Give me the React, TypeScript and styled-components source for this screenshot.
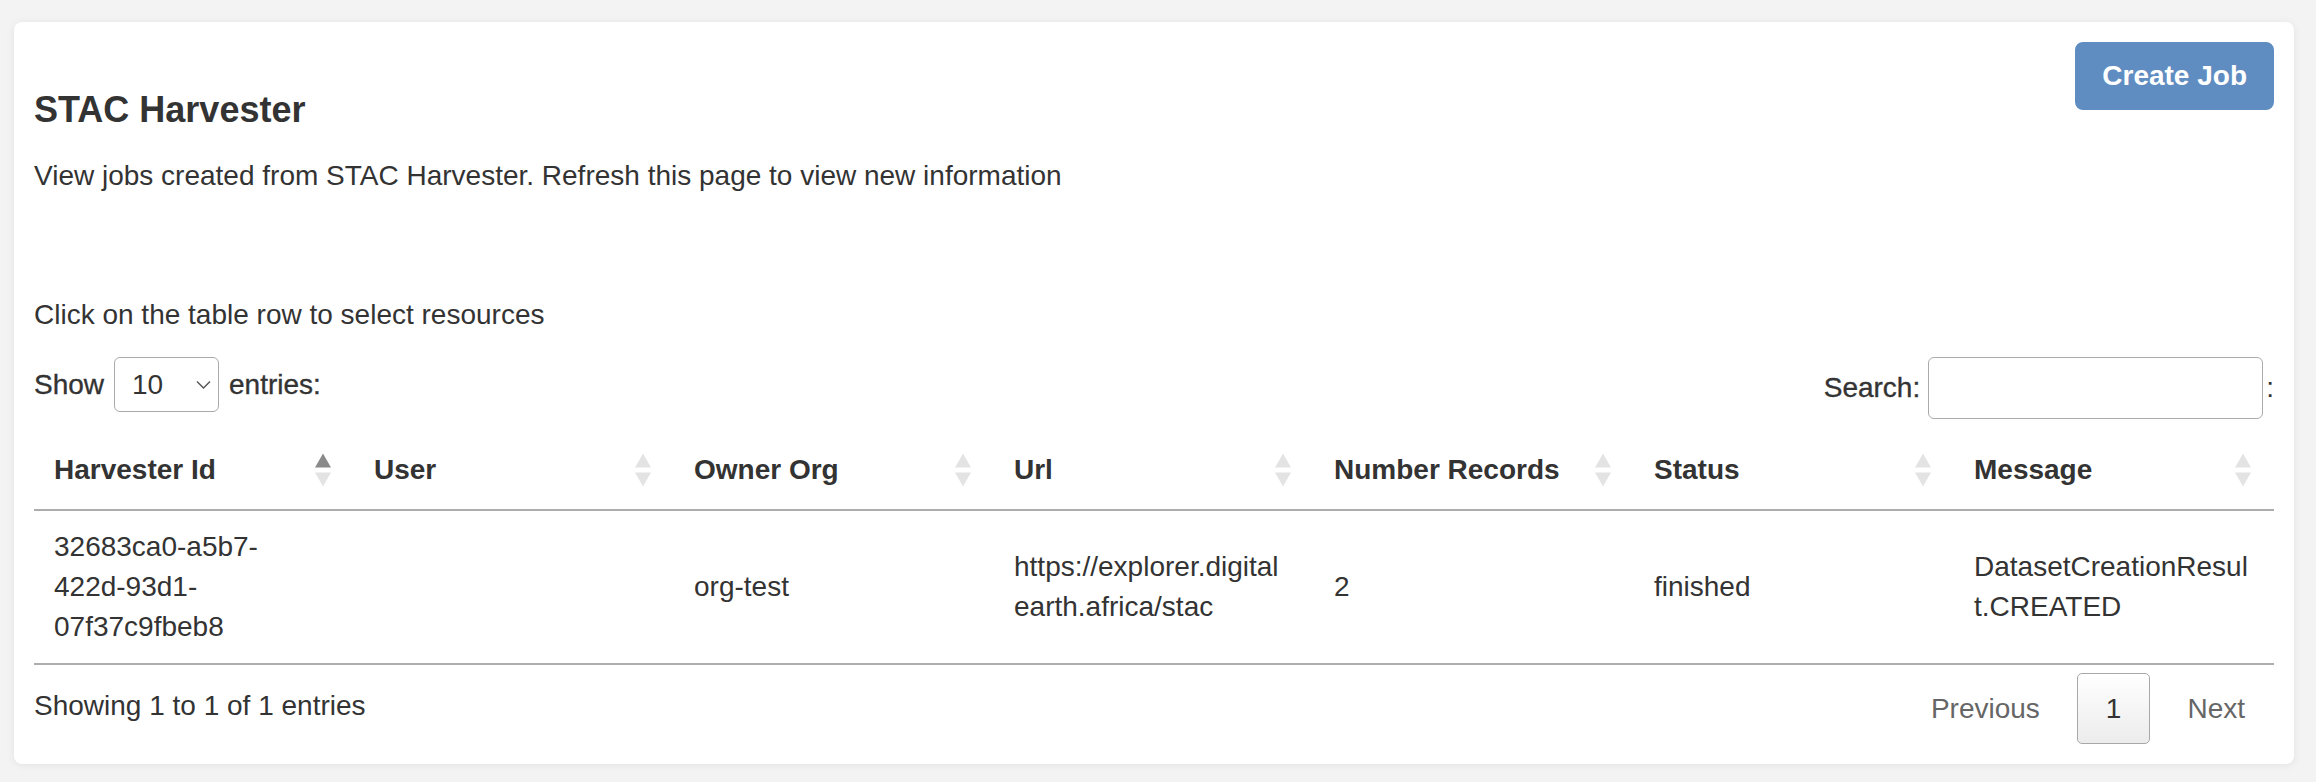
import React from "react";
import styled, { createGlobalStyle } from "styled-components";

const GlobalStyle = createGlobalStyle`
  html, body { margin: 0; padding: 0; }
  body {
    background: #f3f3f3;
    font-family: "Liberation Sans", Arial, Helvetica, sans-serif;
    color: #333;
    font-size: 28px;
    line-height: 40px;
  }
  * { box-sizing: border-box; }
`;

const Page = styled.div`
  padding: 22px 22px 18px 14px;
`;

const Card = styled.section`
  background: #fff;
  border-radius: 8px;
  box-shadow: 0 1px 8px rgba(0, 0, 0, 0.07);
  padding: 20px;
`;

const HeaderRow = styled.div`
  display: flex;
  justify-content: space-between;
  align-items: flex-start;
`;

const Title = styled.h3`
  margin: 48px 0 0;
  font-size: 36px;
  line-height: 40px;
  font-weight: 700;
  color: #333;
`;

const PrimaryButton = styled.button`
  font-family: inherit;
  font-size: 28px;
  font-weight: 700;
  line-height: 40px;
  color: #fff;
  background: #5f8dc1;
  border: 2px solid #5f8dc1;
  border-radius: 8px;
  padding: 12px 25px;
  cursor: pointer;
`;

const Paragraph = styled.p<{ $top: number }>`
  margin: ${(p) => p.$top}px 0 0;
  font-size: 28px;
  line-height: 40px;
`;

const ControlsRow = styled.div`
  margin-top: 22px;
  display: flex;
  justify-content: space-between;
  align-items: flex-start;
`;

const ControlLabel = styled.label`
  display: flex;
  align-items: center;
  gap: 10px;
  font-weight: 400;
  color: #333;
  -webkit-text-stroke: 0.35px #333;
`;

const SearchLabel = styled(ControlLabel)`
  gap: 8px;
`;

const SelectWrap = styled.div`
  position: relative;
  width: 105px;
  height: 55px;
`;

const Select = styled.select`
  appearance: none;
  -webkit-appearance: none;
  width: 100%;
  height: 100%;
  font-family: inherit;
  font-size: 28px;
  color: #333;
  background: #fff;
  border: 1.5px solid #aaa;
  border-radius: 6px;
  padding: 0 0 0 17px;
  -webkit-text-stroke: 0;
`;

const Chevron = styled.svg`
  position: absolute;
  right: 8px;
  top: 50%;
  transform: translateY(-50%);
  pointer-events: none;
`;

const SearchInput = styled.input`
  width: 335px;
  height: 62px;
  border: 1.5px solid #aaa;
  border-radius: 6px;
  font-family: inherit;
  font-size: 28px;
  padding: 0 10px;
  background: #fff;
`;

const Colon = styled.span`
  -webkit-text-stroke: 0;
  margin-left: -5px;
`;

const Table = styled.table`
  margin-top: 11px;
  width: 100%;
  table-layout: fixed;
  border-collapse: collapse;
`;

const Th = styled.th`
  position: relative;
  text-align: left;
  font-weight: 700;
  font-size: 28px;
  line-height: 40px;
  padding: 20px 46px 19px 20px;
  border-bottom: 2px solid #adadad;
  color: #333;
  white-space: nowrap;
`;

const SortIcon = styled.svg`
  position: absolute;
  right: 23px;
  top: 50%;
  transform: translateY(-50%);
`;

const Td = styled.td`
  padding: 16px 25.5px 16px 20px;
  vertical-align: middle;
  font-size: 28px;
  line-height: 40px;
  overflow-wrap: anywhere;
  border-bottom: 2px solid #adadad;
`;

const Footer = styled.div`
  display: flex;
  justify-content: space-between;
  align-items: flex-start;
`;

const Info = styled.div`
  padding-top: 21px;
`;

const Pagination = styled.div`
  padding-top: 8px;
  display: flex;
  gap: 8px;
`;

const PageButton = styled.span<{ $current?: boolean }>`
  display: inline-block;
  min-width: 42px;
  text-align: center;
  padding: 15px 28px 14px;
  line-height: 40px;
  border-radius: 5px;
  border: 1px solid ${(p) => (p.$current ? "#a8a8a8" : "transparent")};
  background: ${(p) =>
    p.$current ? "linear-gradient(to bottom, #ffffff 0%, #ececec 100%)" : "transparent"};
  color: ${(p) => (p.$current ? "#333" : "#666")};
`;

type Col = { label: string; sort?: "asc" };

const columns: Col[] = [
  { label: "Harvester Id", sort: "asc" },
  { label: "User" },
  { label: "Owner Org" },
  { label: "Url" },
  { label: "Number Records" },
  { label: "Status" },
  { label: "Message" },
];

const rows = [
  [
    "32683ca0-a5b7-422d-93d1-07f37c9fbeb8",
    "",
    "org-test",
    "https://explorer.digitalearth.africa/stac",
    "2",
    "finished",
    "DatasetCreationResult.CREATED",
  ],
];

function Sort({ asc }: { asc?: boolean }) {
  return (
    <SortIcon width="16" height="33" viewBox="0 0 16 33">
      <path d="M8 0 L16 14 L0 14 Z" fill={asc ? "#8a8a8a" : "#e3e3e3"} />
      <path d="M0 19 L16 19 L8 33 Z" fill="#e3e3e3" />
    </SortIcon>
  );
}

export default function App() {
  return (
    <>
      <GlobalStyle />
      <Page>
        <Card>
          <HeaderRow>
            <Title>STAC Harvester</Title>
            <PrimaryButton>Create Job</PrimaryButton>
          </HeaderRow>
          <Paragraph $top={26}>
            View jobs created from STAC Harvester. Refresh this page to view new information
          </Paragraph>
          <Paragraph $top={99}>Click on the table row to select resources</Paragraph>
          <ControlsRow>
            <ControlLabel>
              Show
              <SelectWrap>
                <Select defaultValue="10">
                  <option value="10">10</option>
                  <option value="25">25</option>
                  <option value="50">50</option>
                  <option value="100">100</option>
                </Select>
                <Chevron width="15" height="9" viewBox="0 0 15 9">
                  <polyline
                    points="1,1 7.5,7.5 14,1"
                    fill="none"
                    stroke="#555"
                    strokeWidth="1.4"
                  />
                </Chevron>
              </SelectWrap>
              entries:
            </ControlLabel>
            <SearchLabel>
              Search:
              <SearchInput type="search" />
              <Colon>:</Colon>
            </SearchLabel>
          </ControlsRow>
          <Table>
            <thead>
              <tr>
                {columns.map((c) => (
                  <Th key={c.label}>
                    {c.label}
                    <Sort asc={c.sort === "asc"} />
                  </Th>
                ))}
              </tr>
            </thead>
            <tbody>
              {rows.map((r, i) => (
                <tr key={i}>
                  {r.map((cell, j) => (
                    <Td key={j}>{cell}</Td>
                  ))}
                </tr>
              ))}
            </tbody>
          </Table>
          <Footer>
            <Info>Showing 1 to 1 of 1 entries</Info>
            <Pagination>
              <PageButton>Previous</PageButton>
              <PageButton $current>1</PageButton>
              <PageButton>Next</PageButton>
            </Pagination>
          </Footer>
        </Card>
      </Page>
    </>
  );
}
